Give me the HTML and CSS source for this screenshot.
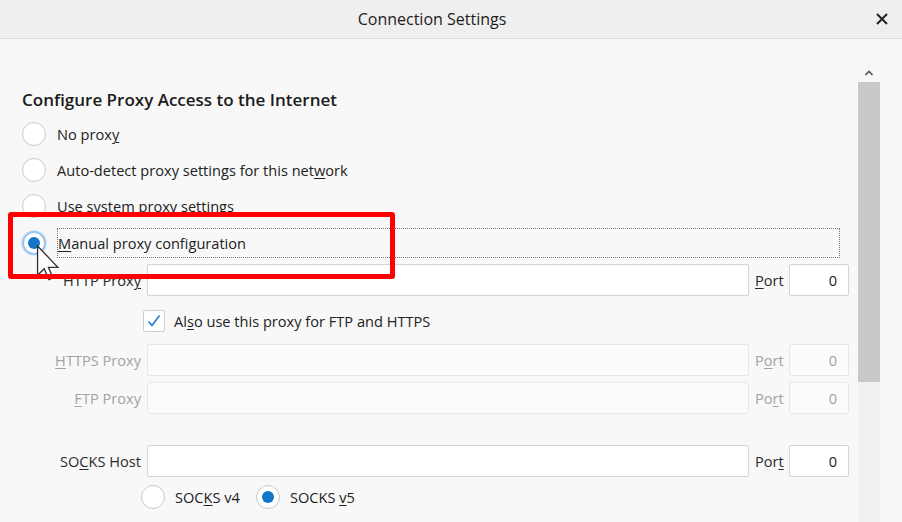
FILE: index.html
```html
<!DOCTYPE html>
<html>

<head>
    <title>Connection Settings</title>
    <meta charset="utf-8">
    <link rel="stylesheet" href="styles.css">
</head>

<body>

    <header class="titlebar">
        <h1>Connection Settings</h1>
        <button class="luk">
            <svg width="12" height="12" viewBox="0 0 12 12"><path d="M1 1L11 11M11 1L1 11" stroke="#222" stroke-width="2"/></svg>
        </button>
    </header>

    <div class="vindue">
        <main class="indhold">
            <h2>Configure Proxy Access to the Internet</h2>

            <div class="valg"><span class="radio"></span><span>No prox<u>y</u></span></div>
            <div class="valg"><span class="radio"></span><span>Auto-detect proxy settings for this net<u>w</u>ork</span></div>
            <div class="valg"><span class="radio"></span><span>Use s<u>y</u>stem proxy settings</span></div>
            <div class="valg manuel"><span class="radio fokus"></span><span class="fokusboks"><u>M</u>anual proxy configuration</span></div>

            <div class="felter">
                <label class="lbl">HTTP Prox<u>y</u></label>
                <div class="input"></div>
                <label class="lbl port"><u>P</u>ort</label>
                <div class="input tal">0</div>

                <div class="tom"></div>
                <div class="check"><span class="boks"><svg width="16" height="16" viewBox="0 0 16 16"><path d="M2.5 8.5L6 12.5L13.5 2.5" fill="none" stroke="#1f7ad6" stroke-width="1.6"/></svg></span><span>Al<u>s</u>o use this proxy for FTP and HTTPS</span></div>

                <label class="lbl slukket"><u>H</u>TTPS Proxy</label>
                <div class="input slukket"></div>
                <label class="lbl port slukket">P<u>o</u>rt</label>
                <div class="input tal slukket">0</div>

                <label class="lbl slukket"><u>F</u>TP Proxy</label>
                <div class="input slukket"></div>
                <label class="lbl port slukket">Po<u>r</u>t</label>
                <div class="input tal slukket">0</div>

                <label class="lbl socks">SO<u>C</u>KS Host</label>
                <div class="input socks"></div>
                <label class="lbl port socks">Por<u>t</u></label>
                <div class="input tal socks">0</div>

                <div class="tom"></div>
                <div class="socksvalg">
                    <span class="radio"></span><span>SOC<u>K</u>S v4</span>
                    <span class="radio valgt"></span><span>SOCKS <u>v</u>5</span>
                </div>
            </div>

            <div class="markering"></div>
            <svg class="cursor" width="24" height="36" viewBox="0 0 12 19">
                <path d="M0.5 0.5V16L4 12.5L6.5 18.3L8.6 17.4L6.2 11.8H11.2Z" fill="#fff" stroke="#333" stroke-width="0.7"/>
            </svg>
        </main>

        <div class="scroll">
            <div class="pil">
                <svg width="10" height="6" viewBox="0 0 10 6"><path d="M1.5 5L5 1.5L8.5 5" fill="none" stroke="#555" stroke-width="1.6"/></svg>
            </div>
            <div class="thumb"></div>
        </div>
    </div>

</body>

</html>
```

FILE: styles.css
```css
body {
    margin: 0;
    background-color: #f8f8f8;
    font-family: "Open Sans", "Noto Sans", sans-serif;
    color: #222;
    height: 522px;
    overflow: hidden;
}

u {
    text-decoration-thickness: 1px;
    text-underline-offset: 2px;
}

.titlebar {
    height: 38px;
    background-color: #efefef;
    border-bottom: 1px solid #dedede;
    display: flex;
    align-items: center;
    justify-content: center;
    position: relative;
}

.titlebar h1 {
    margin: 0;
    font-size: 16px;
    font-weight: normal;
    color: #1d1d1d;
    padding-right: 38px;
}

.luk {
    position: absolute;
    right: 14px;
    top: 13px;
    border: none;
    background: none;
    padding: 0;
    width: 12px;
    height: 12px;
    display: flex;
}

.vindue {
    display: flex;
}

.indhold {
    flex: 1;
    padding-left: 22px;
    position: relative;
}

h2 {
    margin: 50px 0 0 0;
    font-size: 17px;
    font-weight: 600;
    line-height: 21px;
    color: #1b1b1b;
}

.valg {
    display: flex;
    align-items: center;
    height: 36px;
    font-size: 14.6px;
    gap: 11px;
}

.valg:first-of-type {
    margin-top: 6px;
}

.radio {
    width: 24px;
    height: 24px;
    box-sizing: border-box;
    border: 1px solid #c9c9c9;
    border-radius: 50%;
    background-color: #fff;
    flex-shrink: 0;
    position: relative;
}

.radio.fokus {
    border: 2px solid #9cc6ef;
    box-shadow: 0 0 0 1px #d7e8f8;
}

.radio.fokus::after,
.radio.valgt::after {
    content: "";
    position: absolute;
    left: 50%;
    top: 50%;
    width: 12px;
    height: 12px;
    margin: -6px 0 0 -6px;
    border-radius: 50%;
    background-color: #1476c9;
}

.manuel {
    height: 38px;
}

.fokusboks {
    flex: 1;
    height: 30px;
    box-sizing: border-box;
    border: 1px dotted #777;
    display: flex;
    align-items: center;
    margin-right: 18px;
}

.felter {
    display: grid;
    grid-template-columns: 119px 602px 28px 60px;
    column-gap: 6px;
    row-gap: 6px;
    font-size: 14.6px;
    margin-top: 2px;
}

.lbl {
    display: flex;
    align-items: center;
    justify-content: flex-end;
    color: #2a2a2a;
}

.lbl.port {
    justify-content: flex-start;
}

.input {
    height: 32px;
    box-sizing: border-box;
    border: 1px solid #d4d4d4;
    border-radius: 2px;
    background-color: #fff;
}

.tal {
    display: flex;
    align-items: center;
    justify-content: flex-end;
    padding-right: 11px;
}

.slukket {
    color: #a3a3a3;
}

.input.slukket {
    background-color: #fbfbfb;
    border-color: #e6e6e6;
}

.check {
    grid-column: 2 / 5;
    display: flex;
    align-items: center;
    gap: 9px;
    height: 35px;
    margin-left: -4px;
    margin-top: 1px;
}

.boks {
    width: 22px;
    height: 22px;
    box-sizing: border-box;
    border: 1px solid #cfcfcf;
    background-color: #fff;
    border-radius: 2px;
    display: flex;
    align-items: center;
    justify-content: center;
}

.socks {
    margin-top: 25px;
}

.socksvalg {
    grid-column: 2 / 5;
    display: flex;
    align-items: center;
    gap: 10px;
    margin-left: -6px;
    margin-top: 2px;
}

.socksvalg .radio.valgt {
    margin-left: 6px;
}

.markering {
    position: absolute;
    left: 8px;
    top: 173px;
    width: 377px;
    height: 57px;
    border: 5px solid #ff0000;
    border-radius: 3px;
    z-index: 2;
}

.cursor {
    position: absolute;
    left: 36px;
    top: 206px;
    z-index: 1;
}

.scroll {
    width: 22px;
    margin-right: 22px;
    margin-top: 24px;
    height: 460px;
    background-color: #f0f0f0;
}

.pil {
    height: 19px;
    display: flex;
    align-items: center;
    justify-content: center;
    background-color: #f7f7f7;
}

.thumb {
    height: 300px;
    background-color: #c9c9c9;
}
```
